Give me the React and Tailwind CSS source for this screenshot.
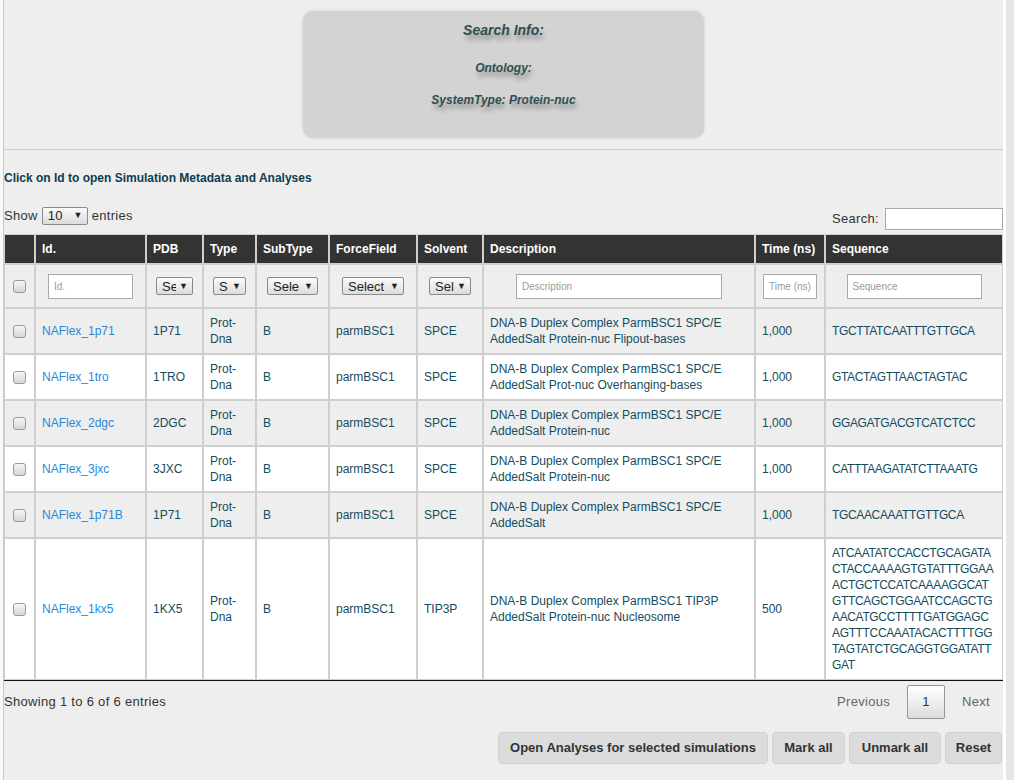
import React from 'react';

const rows = [
    {id: 'NAFlex_1p71', pdb: '1P71', desc: 'DNA-B Duplex Complex ParmBSC1 SPC/E AddedSalt Protein-nuc Flipout-bases', solvent: 'SPCE', time: '1,000', seq: ['TGCTTATCAATTTGTTGCA']},
    {id: 'NAFlex_1tro', pdb: '1TRO', desc: 'DNA-B Duplex Complex ParmBSC1 SPC/E AddedSalt Prot-nuc Overhanging-bases', solvent: 'SPCE', time: '1,000', seq: ['GTACTAGTTAACTAGTAC']},
    {id: 'NAFlex_2dgc', pdb: '2DGC', desc: 'DNA-B Duplex Complex ParmBSC1 SPC/E AddedSalt Protein-nuc', solvent: 'SPCE', time: '1,000', seq: ['GGAGATGACGTCATCTCC']},
    {id: 'NAFlex_3jxc', pdb: '3JXC', desc: 'DNA-B Duplex Complex ParmBSC1 SPC/E AddedSalt Protein-nuc', solvent: 'SPCE', time: '1,000', seq: ['CATTTAAGATATCTTAAATG']},
    {id: 'NAFlex_1p71B', pdb: '1P71', desc: 'DNA-B Duplex Complex ParmBSC1 SPC/E AddedSalt', solvent: 'SPCE', time: '1,000', seq: ['TGCAACAAATTGTTGCA']},
    {id: 'NAFlex_1kx5', pdb: '1KX5', desc: 'DNA-B Duplex Complex ParmBSC1 TIP3P AddedSalt Protein-nuc Nucleosome', solvent: 'TIP3P', time: '500', seq: [
        'ATCAATATCCACCTGCAGATA',
        'CTACCAAAAGTGTATTTGGAA',
        'ACTGCTCCATCAAAAGGCAT',
        'GTTCAGCTGGAATCCAGCTG',
        'AACATGCCTTTTGATGGAGC',
        'AGTTTCCAAATACACTTTTGG',
        'TAGTATCTGCAGGTGGATATT',
        'GAT',
    ]},
];

const headers = ['', 'Id.', 'PDB', 'Type', 'SubType', 'ForceField', 'Solvent', 'Description', 'Time (ns)', 'Sequence'];

function Checkbox() {
    return <span className="inline-block w-[13px] h-[13px] rounded-[3px] border border-[#9a9a9a] bg-gradient-to-b from-[#f6f6f6] to-[#d6d6d6]"></span>;
}

function FakeSelect(props) {
    return (
        <span className={'inline-flex items-center h-[18px] border border-[#8a8a8a] rounded-[2px] bg-gradient-to-b from-[#fbfbfb] to-[#dcdcdc] text-[13px] leading-none text-[#222] pl-[5px] pr-[4px] overflow-hidden ' + props.width}>
            <span className="flex-1 overflow-hidden whitespace-nowrap">{props.label}</span>
            <span className="text-[9px] ml-[3px]">▼</span>
        </span>
    );
}

function FakeInput(props) {
    return (
        <span className={'flex items-center h-[25px] bg-white border border-[#a9a9a9] pl-[5px] text-[10px] text-[#9a9a9a] ' + props.width}>
            {props.placeholder}
        </span>
    );
}

export default function App() {
    const cell = 'flex items-center px-[6px] py-[6px] text-[12px] leading-4 text-[#134d5e]';

    return (
        <div className="flex min-h-[780px] w-[1014px] font-['Liberation_Sans',Arial,sans-serif]">
            <div className="w-[3px] bg-[#f8f8f8]"></div>
            <div className="w-px bg-[#c8c8c8]"></div>
            <div className="w-[999px] bg-[#eeeeee] pt-[11px]">
                {/* search info box */}
                <div className="mx-auto w-[401px] h-[127px] rounded-[10px] bg-[#d3d3d3] shadow-[0_0_3px_rgba(0,0,0,0.15)] pt-[9px] text-center italic font-bold text-[#2f4f4f] [text-shadow:2px_5px_4px_rgba(0,0,0,0.3)]">
                    <div className="text-[14px] leading-5">Search Info:</div>
                    <div className="text-[12px] leading-4 mt-[20px]">Ontology:</div>
                    <div className="text-[12px] leading-4 mt-[16px]">SystemType: Protein-nuc</div>
                </div>

                <div className="mt-[11px] h-px bg-[#cccccc]"></div>

                <div className="mt-[20px] text-[12px] leading-4 font-bold text-[#0d3d50]">
                    Click on Id to open Simulation Metadata and Analyses
                </div>

                <div className="mt-[19px] h-[26px] flex justify-between items-start text-[13px] text-[#333] tracking-[0.3px]">
                    <div className="flex items-center gap-[4px] pt-px">
                        <span>Show</span>
                        <FakeSelect width="w-[46px]" label="10" />
                        <span>entries</span>
                    </div>
                    <div className="flex items-center gap-[6px] pt-[3px]">
                        <span>Search:</span>
                        <span className="w-[118px] h-[22px] bg-white border border-[#a9a9a9]"></span>
                    </div>
                </div>

                <div className="mt-[3px] border-b border-[#111]">
                    <div className="grid grid-cols-[29px_109px_55px_51px_71px_86px_64px_270px_68px_176px] gap-[2px] p-px bg-[#cfcfcf]">
                        {headers.map((h, i) => (
                            <div key={'h' + i} className="h-[28px] flex items-center px-[6px] bg-[#333] text-white font-bold text-[12px]">{h}</div>
                        ))}

                        <div className="h-[42px] flex items-center justify-center bg-[#eeeeee]"><Checkbox /></div>
                        <div className="flex items-center justify-center bg-[#eeeeee]"><FakeInput width="w-[85px]" placeholder="Id." /></div>
                        <div className="flex items-center justify-center bg-[#eeeeee]"><FakeSelect width="w-[37px]" label="Se" /></div>
                        <div className="flex items-center justify-center bg-[#eeeeee]"><FakeSelect width="w-[33px]" label="S" /></div>
                        <div className="flex items-center justify-center bg-[#eeeeee]"><FakeSelect width="w-[51px]" label="Sele" /></div>
                        <div className="flex items-center justify-center bg-[#eeeeee]"><FakeSelect width="w-[62px]" label="Select" /></div>
                        <div className="flex items-center justify-center bg-[#eeeeee]"><FakeSelect width="w-[42px]" label="Sel" /></div>
                        <div className="flex items-center justify-center bg-[#eeeeee]"><FakeInput width="w-[206px]" placeholder="Description" /></div>
                        <div className="flex items-center justify-center bg-[#eeeeee]"><FakeInput width="w-[54px]" placeholder="Time (ns)" /></div>
                        <div className="flex items-center justify-center bg-[#eeeeee]"><FakeInput width="w-[135px]" placeholder="Sequence" /></div>

                        {rows.map((r, i) => {
                            const bg = i % 2 === 0 ? 'bg-[#eeeeee]' : 'bg-white';
                            return (
                                <React.Fragment key={r.id}>
                                    <div className={'flex items-center justify-center ' + bg}><Checkbox /></div>
                                    <div className={cell + ' ' + bg}><span className="text-[#2b88d9]">{r.id}</span></div>
                                    <div className={cell + ' ' + bg}>{r.pdb}</div>
                                    <div className={cell + ' ' + bg}>Prot-Dna</div>
                                    <div className={cell + ' ' + bg}>B</div>
                                    <div className={cell + ' ' + bg}>parmBSC1</div>
                                    <div className={cell + ' ' + bg}>{r.solvent}</div>
                                    <div className={cell + ' ' + bg}>{r.desc}</div>
                                    <div className={cell + ' ' + bg}>{r.time}</div>
                                    <div className={cell + ' overflow-hidden ' + bg}>
                                        <div className="tracking-[-0.35px]">
                                            {r.seq.map((s) => (
                                                <div key={s} className="whitespace-nowrap">{s}</div>
                                            ))}
                                        </div>
                                    </div>
                                </React.Fragment>
                            );
                        })}
                    </div>
                </div>

                <div className="mt-[4px] h-[34px] flex items-center justify-between text-[13px] tracking-[0.3px]">
                    <span className="text-[#333]">Showing 1 to 6 of 6 entries</span>
                    <div className="flex items-center gap-[17px] pr-[13px] text-[#666]">
                        <span>Previous</span>
                        <span className="w-[38px] h-[34px] flex items-center justify-center border border-[#979797] rounded-[2px] bg-gradient-to-b from-white to-[#dcdcdc] text-[#333]">1</span>
                        <span>Next</span>
                    </div>
                </div>

                <div className="mt-[13px] flex justify-end gap-[4px] pr-px text-[13px] font-bold text-[#333]">
                    <button className="w-[270px] h-[32px] rounded-[4px] bg-[#dcdcdc] border border-[#d2d2d2]">Open Analyses for selected simulations</button>
                    <button className="w-[73px] h-[32px] rounded-[4px] bg-[#dcdcdc] border border-[#d2d2d2]">Mark all</button>
                    <button className="w-[92px] h-[32px] rounded-[4px] bg-[#dcdcdc] border border-[#d2d2d2]">Unmark all</button>
                    <button className="w-[57px] h-[32px] rounded-[4px] bg-[#dcdcdc] border border-[#d2d2d2]">Reset</button>
                </div>
            </div>
            <div className="w-[3px] bg-white"></div>
            <div className="flex-1 bg-[#e6e6e6]"></div>
        </div>
    );
}
